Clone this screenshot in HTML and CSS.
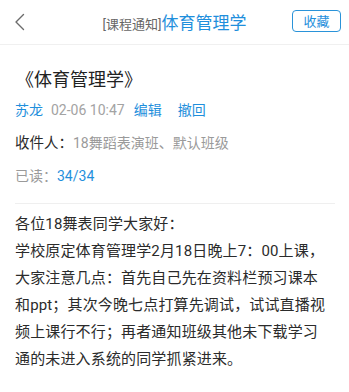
FILE: index.html
```html
<!DOCTYPE html>
<html lang="zh-CN">
<head>
<meta charset="utf-8">
<link rel="stylesheet" href="styles.css">
</head>
<body>
<header class="topbar">
  <span class="back">
    <svg width="12" height="18" viewBox="0 0 12 18"><polyline points="9.5,1.5 2,9 9.5,16.5" fill="none" stroke="#6b6b6b" stroke-width="1.4" stroke-linecap="round" stroke-linejoin="round"/></svg>
  </span>
  <div class="topbar-title"><span class="tag">[课程通知]</span><span class="course">体育管理学</span></div>
  <button class="fav">收藏</button>
</header>
<main class="content">
  <h1 class="title">《体育管理学》</h1>
  <div class="meta">
    <span class="blue">苏龙</span>
    <span class="date">02-06 10:47</span>
    <span class="blue action">编辑</span>
    <span class="blue action">撤回</span>
  </div>
  <div class="row"><span class="label">收件人：</span><span class="gray">18舞蹈表演班、默认班级</span></div>
  <div class="row read"><span class="gray">已读：</span><span class="blue num">34/34</span></div>
  <div class="divider"></div>
  <p class="body-text">各位18舞表同学大家好：<br>学校原定体育管理学2月18日晚上7：00上课，大家注意几点：首先自己先在资料栏预习课本和ppt；其次今晚七点打算先调试，试试直播视频上课行不行；再者通知班级其他未下载学习通的未进入系统的同学抓紧进来。</p>
</main>
</body>
</html>
```

FILE: styles.css
```css
* { box-sizing: border-box; }
html, body {
  margin: 0;
  padding: 0;
  background: #fff;
  font-family: Roboto, "Noto Sans CJK SC", sans-serif;
  color: #333;
}
.topbar {
  height: 45px;
  border-bottom: 1px solid #f0f0f0;
  display: flex;
  align-items: center;
  position: relative;
}
.back {
  width: 57px;
  padding-left: 14px;
  display: flex;
  align-items: center;
  margin-top: -1px;
}
.topbar-title {
  flex: 1;
  text-align: center;
  white-space: nowrap;
  margin-top: -1px;
}
.tag {
  font-size: 13px;
  color: #666;
}
.course {
  font-size: 17px;
  color: #1f8fdc;
}
.fav {
  width: 49px;
  height: 22px;
  margin-right: 8px;
  margin-left: 0;
  border: 1px solid #2a93d9;
  border-radius: 4px;
  background: #fff;
  color: #1f8fdc;
  font-size: 13px;
  font-family: "Noto Sans CJK SC", sans-serif;
  padding: 0;
  line-height: 20px;
  margin-top: -2px;
}
.content {
  padding: 22px 14px 0 15px;
}
.title {
  margin: 0 0 0 1px;
  font-size: 18px;
  font-weight: normal;
  line-height: 26px;
  color: #222;
}
.meta {
  margin-top: 7px;
  display: flex;
  align-items: center;
  font-size: 14px;
  line-height: 20px;
}
.blue { color: #1f8fdc; }
.gray { color: #9a9a9a; }
.date {
  color: #a3a3a3;
  margin-left: 8px;
}
.action { margin-left: 9px; }
.action + .action { margin-left: 16px; }
.row {
  margin-top: 13px;
  font-size: 14px;
  line-height: 20px;
}
.row.read { margin-top: 12px; }
.label {
  color: #2a2a2a;
  font-size: 14.5px;
}
.num { font-size: 14px; }
.divider {
  margin-top: 17px;
  height: 1px;
  background: #efefef;
  width: 320px;
}
.body-text {
  margin: 7px 0 0 0;
  width: 317px;
  font-size: 15px;
  letter-spacing: 0.15px;
  line-height: 27px;
  color: #2b2b2b;
  line-break: strict;
}
```
